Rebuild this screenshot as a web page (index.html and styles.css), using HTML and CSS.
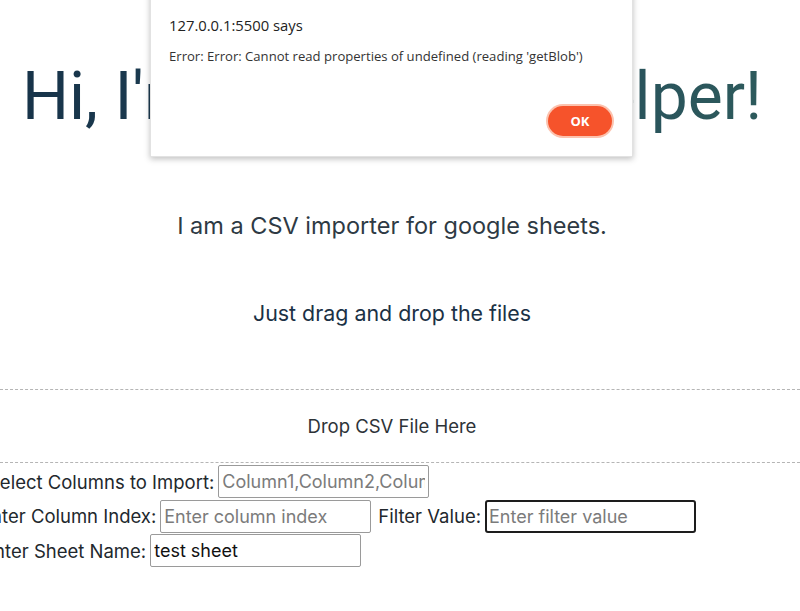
FILE: index.html
```html
<!DOCTYPE html>
<html lang="en">
<head>
<meta charset="utf-8">
<title>CSV Helper</title>
<link rel="stylesheet" href="styles.css">
</head>
<body>
<main class="page">
  <h1 class="hero">Hi, I'<span class="tight">m your Sheets he</span>lper!</h1>
  <p class="sub">I am a CSV importer for google sheets.</p>
  <p class="hint">Just drag and drop the files</p>
  <div class="dropzone">Drop CSV File Here</div>
  <form class="form">
    <div class="row row1">
      <label>Select Columns to Import:</label>
      <input class="field" type="text" placeholder="Column1,Column2,Column3">
    </div>
    <div class="row row2">
      <label>Enter Column Index:</label>
      <input class="field" type="text" placeholder="Enter column index">
      <label class="gap-left">Filter Value:</label>
      <input class="field focused" type="text" placeholder="Enter filter value">
    </div>
    <div class="row row3">
      <label>Enter Sheet Name:</label>
      <input class="field" type="text" value="test sheet">
    </div>
  </form>
</main>
<div class="dialog">
  <div class="dlg-title">127.0.0.1:5500 says</div>
  <div class="dlg-msg">Error: Error: Cannot read properties of undefined (reading 'getBlob')</div>
  <div class="dlg-actions"><button class="ok" type="button">OK</button></div>
</div>
</body>
</html>
```
FILE: styles.css
```css
html, body {
  margin: 0;
  padding: 0;
  background: #ffffff;
  overflow: hidden;
}
body {
  font-family: "Inter", "Noto Sans", sans-serif;
  color: #2b3640;
  width: 800px;
  height: 611px;
  position: relative;
}
.page {
  width: 784px;
  display: flex;
  flex-direction: column;
  align-items: center;
}
.hero {
  margin: 57px 0 0 0;
  font-family: "Roboto", "Liberation Sans", sans-serif;
  font-size: 66px;
  font-weight: 400;
  line-height: 80px;
  white-space: nowrap;
  background: linear-gradient(90deg, #173349 0%, #22475a 50%, #2d5a5c 100%);
  -webkit-background-clip: text;
  background-clip: text;
  color: transparent;
}
.tight { letter-spacing: -1px; }
.sub {
  margin: 74px 0 0 0;
  font-size: 23.5px;
  line-height: 30px;
  color: #2e3a44;
}
.hint {
  margin: 58px 0 0 0;
  font-size: 21.4px;
  line-height: 28px;
  font-weight: 400;
  color: #1b3145;
}
.dropzone {
  align-self: stretch;
  margin-top: 62px;
  margin-right: -16px;
  padding-right: 16px;
  border-top: 1px dashed #b5b5b5;
  border-bottom: 1px dashed #b5b5b5;
  height: 72px;
  display: flex;
  align-items: center;
  justify-content: center;
  font-size: 18.5px;
  color: #2d3338;
}
.form {
  align-self: stretch;
  display: flex;
  flex-direction: column;
  gap: 1.5px;
  margin-top: 2px;
}
.row {
  display: flex;
  align-items: center;
  gap: 4px;
  font-size: 18.5px;
  color: #22282d;
  white-space: nowrap;
}
.row1 { margin-left: -12px; }
.row2 { margin-left: -20px; }
.row3 { margin-left: -17px; }
.gap-left { margin-left: 3px; }
.field {
  box-sizing: border-box;
  width: 211px;
  height: 33px;
  border: 1px solid #9a9a9a;
  border-radius: 2px;
  padding: 0 3px;
  font: inherit;
  font-size: 18px;
  color: #111;
}
.field::placeholder { color: #7b7b7b; }
.focused {
  border: 2px solid #1d1d1d;
  border-radius: 3px;
  padding: 0 2px;
}
.dialog {
  position: absolute;
  left: 150px;
  top: -10px;
  width: 483px;
  height: 167px;
  box-sizing: border-box;
  background: #fff;
  border: 1px solid #e2e2e2;
  box-shadow: 0 2px 6px rgba(0,0,0,0.25);
  font-family: "Open Sans", "Noto Sans", sans-serif;
  padding: 23px 18px 0 18px;
  display: flex;
  flex-direction: column;
}
.dlg-title {
  font-size: 14.8px;
  color: #222;
  line-height: 22px;
}
.dlg-msg {
  margin-top: 11px;
  font-size: 13.1px;
  color: #333;
  line-height: 18px;
}
.dlg-actions {
  display: flex;
  justify-content: flex-end;
  margin-top: 41px;
  padding-right: 2px;
}
.ok {
  width: 64px;
  height: 30px;
  border-radius: 15px;
  border: none;
  background: #f6532b;
  box-shadow: 0 0 0 2px #fcc2ae;
  color: #fff;
  font-family: inherit;
  font-weight: 700;
  font-size: 13px;
}
```
